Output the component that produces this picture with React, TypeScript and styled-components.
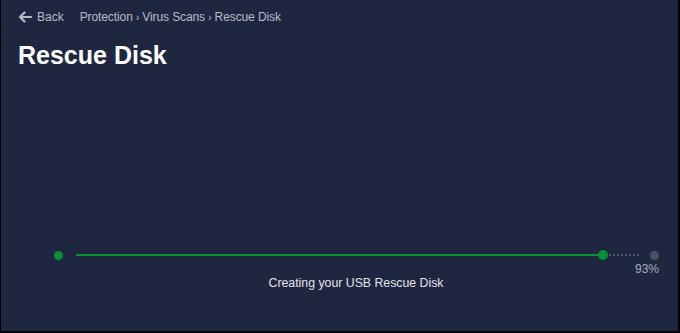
import React from 'react';
import styled, { createGlobalStyle } from 'styled-components';

const GlobalStyle = createGlobalStyle`
  html, body {
    margin: 0;
    padding: 0;
    background: #000;
  }
  * { box-sizing: border-box; }
`;

const colors = {
  bg: '#1f2740',
  crumb: '#b8bcc8',
  title: '#ffffff',
  green: '#0b8f37',
  muted: '#4b5164',
  label: '#a9adb8',
  caption: '#e2e4ea',
};

const Frame = styled.main`
  width: 680px;
  height: 333px;
  background: ${colors.bg};
  border-left: 1px solid #000;
  border-right: 2px solid #000;
  border-bottom: 2px solid #000;
  display: flex;
  flex-direction: column;
  font-family: 'Liberation Sans', Arial, sans-serif;
  overflow: hidden;
`;

const TopBar = styled.nav`
  display: flex;
  align-items: center;
  height: 14px;
  margin-top: 10px;
  padding-left: 17px;
  font-size: 12px;
  color: ${colors.crumb};
`;

const BackLink = styled.span`
  display: flex;
  align-items: center;
  gap: 5px;
  margin-right: 16px;
`;

const Crumbs = styled.span`
  display: flex;
  align-items: center;
  gap: 3px;
  letter-spacing: -0.1px;
`;

const Sep = styled.span`
  font-size: 11px;
`;

const Title = styled.h1`
  margin: 16px 0 0 17px;
  font-size: 25px;
  line-height: 30px;
  font-weight: 700;
  color: ${colors.title};
  letter-spacing: 0;
`;

const Progress = styled.section`
  margin-top: 180px;
  display: flex;
  flex-direction: column;
`;

const TrackRow = styled.div`
  display: flex;
  align-items: center;
  height: 10px;
  padding-left: 53px;
`;

const Dot = styled.span<{ $done?: boolean }>`
  width: 9px;
  height: 9px;
  border-radius: 50%;
  flex-shrink: 0;
  background: ${(p) => (p.$done ? colors.green : colors.muted)};
`;

const Track = styled.div`
  position: relative;
  width: 569px;
  height: 10px;
  margin: 0 5px 0 13px;

  &::before {
    content: '';
    position: absolute;
    left: 0;
    right: 6px;
    top: 4px;
    border-top: 2px dotted ${colors.muted};
  }
`;

const Fill = styled.div`
  position: absolute;
  left: 0;
  top: 4px;
  height: 2px;
  background: ${colors.green};
`;

const Knob = styled.span`
  position: absolute;
  right: -5px;
  top: -4px;
  width: 10px;
  height: 10px;
  border-radius: 50%;
  background: ${colors.green};
`;

const Percent = styled.div`
  align-self: flex-end;
  margin: 2px 19px 0 0;
  font-size: 12px;
  line-height: 14px;
  color: ${colors.label};
`;

const Caption = styled.p`
  margin: -1px 0 0;
  text-align: center;
  font-size: 12.3px;
  line-height: 16px;
  color: ${colors.caption};
  padding-left: 33px;
`;

function BackArrow() {
  return (
    <svg width="14" height="12" viewBox="0 0 14 12" aria-hidden="true">
      <path
        d="M13 6H2.5M6.5 1.5L2 6l4.5 4.5"
        fill="none"
        stroke={colors.crumb}
        strokeWidth="2.2"
        strokeLinecap="round"
        strokeLinejoin="round"
      />
    </svg>
  );
}

export default function App() {
  const percent = 92.6;
  const path = ['Protection', 'Virus Scans', 'Rescue Disk'];

  return (
    <>
      <GlobalStyle />
      <Frame>
        <TopBar>
          <BackLink>
            <BackArrow />
            Back
          </BackLink>
          <Crumbs>
            {path.map((item, i) => (
              <React.Fragment key={item}>
                {i > 0 && <Sep>›</Sep>}
                <span>{item}</span>
              </React.Fragment>
            ))}
          </Crumbs>
        </TopBar>

        <Title>Rescue Disk</Title>

        <Progress>
          <TrackRow>
            <Dot $done />
            <Track>
              <Fill style={{ width: `${percent}%` }}>
                <Knob />
              </Fill>
            </Track>
            <Dot />
          </TrackRow>
          <Percent>{Math.round(percent)}%</Percent>
          <Caption>Creating your USB Rescue Disk</Caption>
        </Progress>
      </Frame>
    </>
  );
}
